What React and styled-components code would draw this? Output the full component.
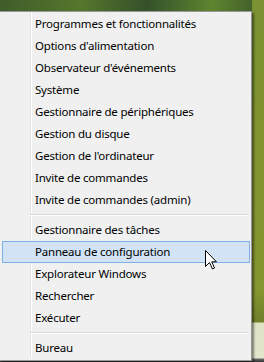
import React from 'react';
import styled, { createGlobalStyle } from 'styled-components';

const GlobalStyle = createGlobalStyle`
  html, body {
    margin: 0;
    padding: 0;
    width: 264px;
    height: 362px;
    overflow: hidden;
  }
`;

// blurred green desktop behind the menu
const Desktop = styled.div`
  position: relative;
  width: 264px;
  height: 362px;
  overflow: hidden;
  padding-top: 11px;
  box-sizing: border-box;
  background:
    linear-gradient(to bottom, transparent 358px, #6b6b6b 359px, #2e2e2e 362px),
    linear-gradient(to bottom, #7c9132 0, #84962f 290px, #707f2b 322px, #dfe3c6 323px, #e3e6cc 362px) right top / 12px 362px no-repeat,
    linear-gradient(100deg, #3f5c2a 0%, #56762c 25%, #34512a 45%, #5f842f 65%, #3c5a29 80%, #6a8f31 100%);
`;

const Menu = styled.div`
  width: 252px;
  box-sizing: border-box;
  border: 1px solid #979797;
  border-left: none;
  padding: 1px 1px 1px 3px;
  display: flex;
  flex-direction: column;
  font-family: "Noto Sans", "Open Sans", sans-serif;
  font-size: 11.5px;
  letter-spacing: -0.2px;
  color: #000;
  background:
    linear-gradient(to right, transparent 30px, #e2e3e3 30px, #e2e3e3 31px, #ffffff 31px, #ffffff 32px, transparent 32px) 0 0 / 100% calc(100% - 2px) no-repeat,
    #f0f0f0;
  box-shadow: 2px 2px 2px rgba(0, 0, 0, 0.45);
`;

const Item = styled.div`
  height: 22px;
  line-height: 20px;
  padding-left: 32px;
  box-sizing: border-box;
  white-space: nowrap;
  border: 1px solid ${p => (p.active ? '#7fb0e4' : 'transparent')};
  margin-left: -1px;
  background: ${p => (p.active ? '#d1e3f5' : 'transparent')};
`;

const Separator = styled.div`
  height: 8px;
  margin-left: 27px;
  margin-right: 1px;
  display: flex;
  flex-direction: column;
  justify-content: center;
  &::before {
    content: '';
    height: 1px;
    background: #d7d7d7;
  }
  &::after {
    content: '';
    height: 1px;
    background: #ffffff;
  }
`;

const Cursor = styled.svg`
  position: absolute;
  left: 205px;
  top: 250px;
`;

const groups = [
  [
    'Programmes et fonctionnalités',
    "Options d'alimentation",
    "Observateur d'événements",
    'Système',
    'Gestionnaire de périphériques',
    'Gestion du disque',
    "Gestion de l'ordinateur",
    'Invite de commandes',
    'Invite de commandes (admin)',
  ],
  [
    'Gestionnaire des tâches',
    'Panneau de configuration',
    'Explorateur Windows',
    'Rechercher',
    'Exécuter',
  ],
  ['Bureau'],
];

export default function App() {
  return (
    <Desktop>
      <GlobalStyle />
      <Menu>
        {groups.map((group, gi) => (
          <React.Fragment key={gi}>
            {gi > 0 && <Separator />}
            {group.map(label => (
              <Item key={label} active={label === 'Panneau de configuration'}>
                {label}
              </Item>
            ))}
          </React.Fragment>
        ))}
      </Menu>
      <Cursor width="13" height="20" viewBox="0 0 13 20">
        <path
          d="M0.5 0.5 L0.5 16.5 L4.5 12.5 L7.5 19 L9.5 18 L6.8 11.8 L11.5 11.8 Z"
          fill="#fff"
          stroke="#000"
          strokeWidth="1"
        />
      </Cursor>
    </Desktop>
  );
}
